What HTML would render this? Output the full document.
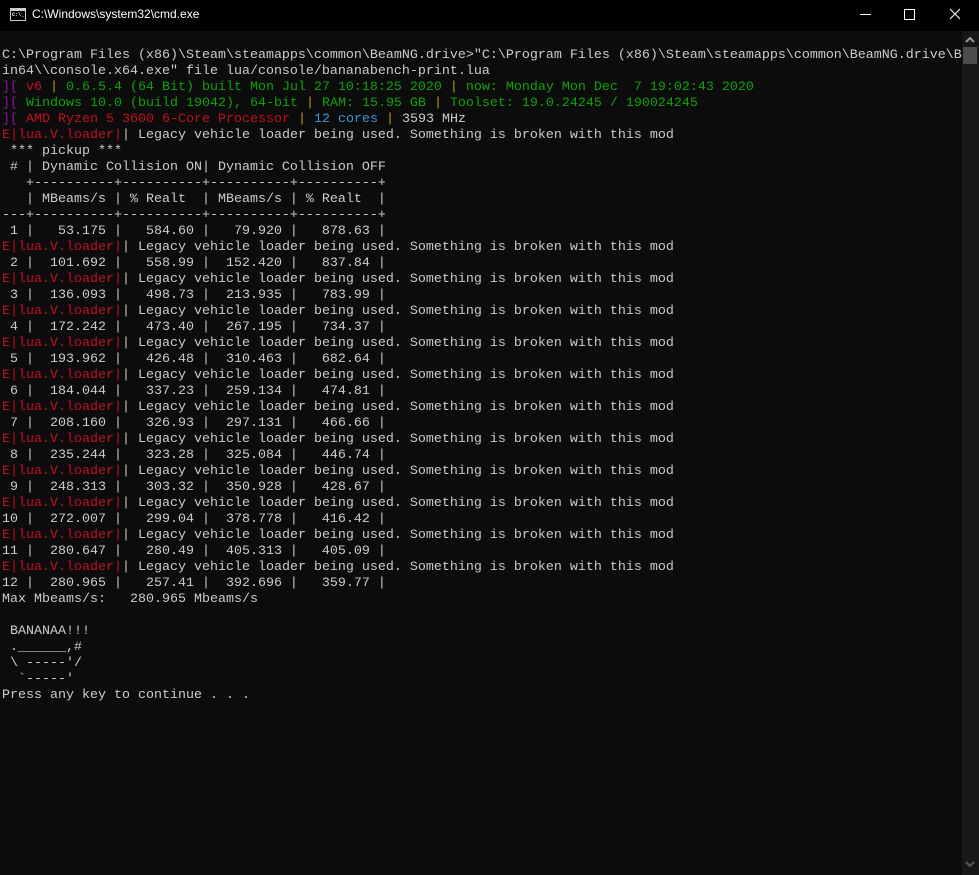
<!DOCTYPE html>
<html><head><meta charset="utf-8"><style>
html,body{margin:0;padding:0;background:#0c0c0c;width:979px;height:875px;overflow:hidden;}
#title{position:absolute;left:0;top:0;width:979px;height:31px;background:#000;}
#title .t{position:absolute;left:32px;top:7px;color:#fff;font:12px "Liberation Sans",sans-serif;}
#icon{position:absolute;left:10px;top:8px;width:14px;height:11px;border:1px solid #ccc;background:#000;}
#icon span{position:absolute;left:1px;top:3px;color:#fff;font:bold 5px "Liberation Mono",monospace;}
#icon:before{content:"";position:absolute;left:0;top:0;width:14px;height:2px;background:#ccc;}
.ctl{position:absolute;top:0;color:#fff;}
#con{position:absolute;left:2px;top:48px;margin:0;font-family:"Liberation Mono",monospace;font-size:13.33px;line-height:16px;color:#cccccc;white-space:pre;}
.r{color:#c50f1f}.g{color:#13a10e}.y{color:#c19c00}.p{color:#881798}.c{color:#3a96dd}
#sb{position:absolute;left:962px;top:31px;width:17px;height:844px;background:#171717;}
#thumb{position:absolute;left:963px;top:47px;width:14px;height:17px;background:#4d4d4d;}
</style></head><body>
<div id="title"><div id="icon"><span>C:\_</span></div><div class="t">C:\Windows\system32\cmd.exe</div>
<div class="ctl" style="left:860px;top:14px;width:11px;height:1px;background:#fff"></div>
<div class="ctl" style="left:904px;top:9px;width:9px;height:9px;border:1px solid #fff"></div>
<svg class="ctl" style="left:949px;top:8px" width="12" height="12"><path d="M1 1L11 11M11 1L1 11" stroke="#fff" stroke-width="1"/></svg>
</div>
<div id="sb"></div><div id="thumb"></div>
<svg style="position:absolute;left:964px;top:36px" width="12" height="8"><path d="M2 6L6 2L10 6" stroke="#9a9a9a" stroke-width="2" fill="none"/></svg>
<svg style="position:absolute;left:964px;top:860px" width="12" height="8"><path d="M2 2L6 6L10 2" stroke="#5a5a5a" stroke-width="2" fill="none"/></svg>
<pre id="con">C:\Program Files (x86)\Steam\steamapps\common\BeamNG.drive&gt;"C:\Program Files (x86)\Steam\steamapps\common\BeamNG.drive\B
in64\\console.x64.exe" file lua/console/bananabench-print.lua
<span class="p">][</span> <span class="r">v6</span> <span class="y">|</span> <span class="g">0.6.5.4 (64 Bit) built Mon Jul 27 10:18:25 2020</span> <span class="y">|</span> <span class="g">now: Monday Mon Dec  7 19:02:43 2020</span>
<span class="p">][</span> <span class="g">Windows 10.0 (build 19042), 64-bit</span> <span class="y">|</span> <span class="g">RAM: 15.95 GB</span> <span class="y">|</span> <span class="g">Toolset: 19.0.24245 / 190024245</span>
<span class="p">][</span> <span class="r">AMD Ryzen 5 3600 6-Core Processor</span> <span class="y">|</span> <span class="c">12 cores</span> <span class="y">|</span> 3593 MHz
<span class="r">E|lua.V.loader|</span>| Legacy vehicle loader being used. Something is broken with this mod
 *** pickup ***
 # | Dynamic Collision ON| Dynamic Collision OFF
   +----------+----------+----------+----------+
   | MBeams/s | % Realt  | MBeams/s | % Realt  |
---+----------+----------+----------+----------+
 1 |   53.175 |   584.60 |   79.920 |   878.63 |
<span class="r">E|lua.V.loader|</span>| Legacy vehicle loader being used. Something is broken with this mod
 2 |  101.692 |   558.99 |  152.420 |   837.84 |
<span class="r">E|lua.V.loader|</span>| Legacy vehicle loader being used. Something is broken with this mod
 3 |  136.093 |   498.73 |  213.935 |   783.99 |
<span class="r">E|lua.V.loader|</span>| Legacy vehicle loader being used. Something is broken with this mod
 4 |  172.242 |   473.40 |  267.195 |   734.37 |
<span class="r">E|lua.V.loader|</span>| Legacy vehicle loader being used. Something is broken with this mod
 5 |  193.962 |   426.48 |  310.463 |   682.64 |
<span class="r">E|lua.V.loader|</span>| Legacy vehicle loader being used. Something is broken with this mod
 6 |  184.044 |   337.23 |  259.134 |   474.81 |
<span class="r">E|lua.V.loader|</span>| Legacy vehicle loader being used. Something is broken with this mod
 7 |  208.160 |   326.93 |  297.131 |   466.66 |
<span class="r">E|lua.V.loader|</span>| Legacy vehicle loader being used. Something is broken with this mod
 8 |  235.244 |   323.28 |  325.084 |   446.74 |
<span class="r">E|lua.V.loader|</span>| Legacy vehicle loader being used. Something is broken with this mod
 9 |  248.313 |   303.32 |  350.928 |   428.67 |
<span class="r">E|lua.V.loader|</span>| Legacy vehicle loader being used. Something is broken with this mod
10 |  272.007 |   299.04 |  378.778 |   416.42 |
<span class="r">E|lua.V.loader|</span>| Legacy vehicle loader being used. Something is broken with this mod
11 |  280.647 |   280.49 |  405.313 |   405.09 |
<span class="r">E|lua.V.loader|</span>| Legacy vehicle loader being used. Something is broken with this mod
12 |  280.965 |   257.41 |  392.696 |   359.77 |
Max Mbeams/s:   280.965 Mbeams/s

 BANANAA!!!
 .______,#
 \ -----'/
  `-----'
Press any key to continue . . .</pre>
</body></html>
